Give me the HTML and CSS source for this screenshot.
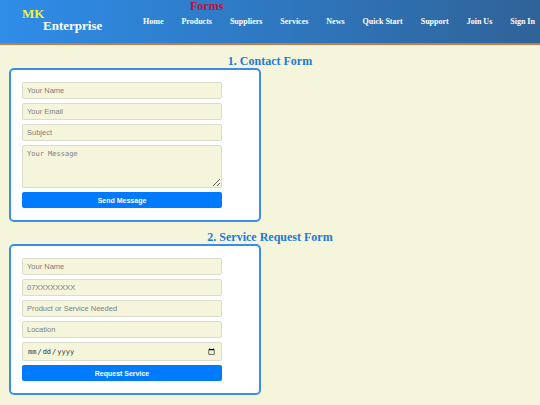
FILE: index.html
```html
<!DOCTYPE html>
<html lang="en">
<head>
<meta charset="utf-8">
<title>Forms - MK Enterprise</title>
<link rel="stylesheet" href="styles.css">
</head>
<body>
<header class="site-header">
  <div class="logo">
    <span class="logo-mk">MK</span>
    <span class="logo-name">Enterprise</span>
  </div>
  <h1 class="page-title">Forms</h1>
  <nav class="nav">
    <a href="#">Home</a>
    <a href="#">Products</a>
    <a href="#">Suppliers</a>
    <a href="#">Services</a>
    <a href="#">News</a>
    <a href="#">Quick Start</a>
    <a href="#">Support</a>
    <a href="#">Join Us</a>
    <a href="#">Sign In</a>
  </nav>
</header>
<main class="content">
  <h2 class="form-title">1. Contact Form</h2>
  <form class="form-box">
    <input class="field" type="text" placeholder="Your Name">
    <input class="field" type="email" placeholder="Your Email">
    <input class="field" type="text" placeholder="Subject">
    <textarea class="field area" placeholder="Your Message"></textarea>
    <button class="btn" type="button">Send Message</button>
  </form>
  <h2 class="form-title">2. Service Request Form</h2>
  <form class="form-box">
    <input class="field" type="text" placeholder="Your Name">
    <input class="field" type="tel" placeholder="07XXXXXXXX">
    <input class="field" type="text" placeholder="Product or Service Needed">
    <input class="field" type="text" placeholder="Location">
    <input class="field date" type="date">
    <button class="btn" type="button">Request Service</button>
  </form>
</main>
</body>
</html>
```
FILE: styles.css
```css
* { box-sizing: border-box; }
html, body { margin: 0; padding: 0; }
body {
  background: #f5f5dc;
  font-family: "Liberation Serif", serif;
  width: 540px;
  height: 405px;
  overflow: hidden;
}
.site-header {
  position: relative;
  height: 45px;
  background: linear-gradient(to right, #2e8de9, #2f6398);
  border-bottom: 2px solid #c47b46;
  display: flex;
  align-items: flex-start;
}
.logo {
  display: flex;
  flex-direction: column;
  padding: 8px 0 0 22px;
  font-weight: bold;
  font-size: 13px;
  line-height: 12px;
  width: 143px;
  flex: none;
}
.logo-mk { color: #eef23a; }
.logo-name { color: #ffffff; margin-left: 21px; }
.page-title {
  position: absolute;
  left: 190px;
  top: 0;
  margin: 0;
  font-size: 12px;
  line-height: 12px;
  color: #c0103a;
}
.nav {
  flex: 1;
  display: flex;
  justify-content: space-between;
  padding: 17px 5px 0 0;
}
.nav a {
  color: #ffffff;
  text-decoration: none;
  font-weight: bold;
  font-size: 8px;
  line-height: 10px;
  white-space: nowrap;
}
.content {
  padding: 0 9px;
}
.form-title {
  margin: 10px 0 1px;
  text-align: center;
  font-size: 12px;
  line-height: 12px;
  color: #1d7ad6;
}
.form-box + .form-title {
  margin-top: 9px;
}
.form-box {
  width: 252px;
  background: #ffffff;
  border: 2px solid #3b8ee8;
  border-radius: 5px;
  padding: 12px 11px 12px;
  display: flex;
  flex-direction: column;
  gap: 4px;
}
.field {
  width: 200px;
  height: 17px;
  margin: 0;
  padding: 0 4px;
  background: #f5f5dc;
  border: 1px solid #dcdccc;
  border-radius: 2px;
  font-family: "Liberation Sans", Arial, sans-serif;
  font-size: 7.5px;
  color: #333;
}
.field::placeholder { color: #808080; }
.area {
  height: 43px;
  padding: 4px;
  font-family: "DejaVu Sans Mono", monospace;
  font-size: 7px;
  resize: vertical;
  display: block;
}
.date {
  height: 19px;
  font-family: "DejaVu Sans Mono", monospace;
  font-size: 7px;
  color: #333;
}
.btn {
  width: 200px;
  height: 16px;
  background: #007bff;
  color: #ffffff;
  border: none;
  border-radius: 2px;
  font-family: "Liberation Sans", Arial, sans-serif;
  font-weight: bold;
  font-size: 7px;
  padding: 0;
}
```
